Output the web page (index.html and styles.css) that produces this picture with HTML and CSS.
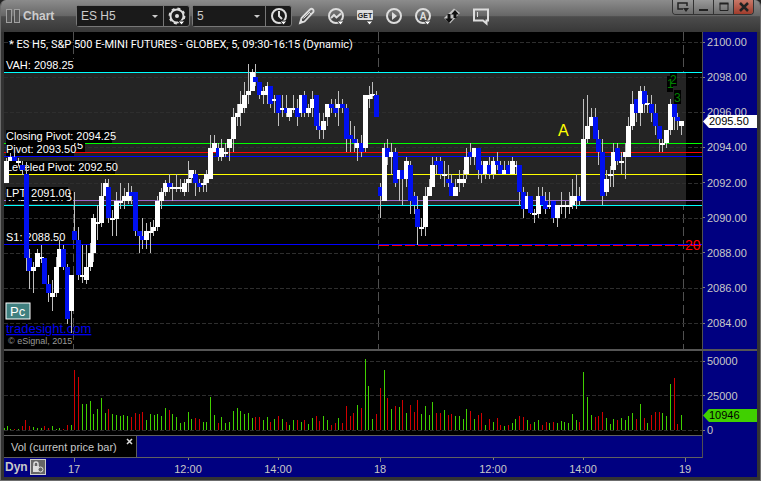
FILE: index.html
```html
<!DOCTYPE html>
<html lang="en">
<head>
  <meta charset="UTF-8" />
  <meta name="viewport" content="width=device-width, initial-scale=1.0"/>
  <title>Chart - ES H5</title>
  <link rel="stylesheet" href="styles.css">
</head>
<body>

<div class="window">

  <!-- Title bar + tools -->
  <header class="toolbar">
    <span class="grip"><i></i><i></i></span>
    <h1>Chart</h1>

    <div class="combo symbol">
      <select aria-label="Symbol"><option>ES H5</option></select>
      <button type="button" aria-label="Symbol settings">
        <svg width="20" height="20" viewBox="0 0 20 20">
          <circle cx="10" cy="10" r="6.5" fill="none" stroke="#ddd" stroke-width="2"/>
          <circle cx="10" cy="10" r="7.6" fill="none" stroke="#ddd" stroke-width="1.6" stroke-dasharray="3 3"/>
          <circle cx="10" cy="10" r="2" fill="#ddd"/>
          <path d="M11 15h7l-3.500 4z" fill="#fff" stroke="#1a1a1a" stroke-width="1"/>
        </svg>
      </button>
    </div>

    <div class="combo interval">
      <select aria-label="Interval"><option>5</option></select>
      <button type="button" aria-label="Time template">
        <svg width="20" height="20" viewBox="0 0 20 20">
          <circle cx="10" cy="10" r="7" fill="none" stroke="#ddd" stroke-width="2"/>
          <path d="M10 5v5l3 3" fill="none" stroke="#ddd" stroke-width="2"/>
          <path d="M11 15h7l-3.500 4z" fill="#fff" stroke="#1a1a1a" stroke-width="1"/>
        </svg>
      </button>
    </div>

    <nav class="tools">
      <button type="button" aria-label="Draw">
        <svg width="20" height="20" viewBox="0 0 20 20">
          <path d="M3 17l1.500-5L13 3.500a2 2 0 0 1 3 3L7.500 15.500z" fill="none" stroke="#ddd" stroke-width="1.800"/>
          <path d="M3 17l1-3 2 2zM11.500 5.500l3 3M6.500 12.500l6-6" fill="#ddd" stroke="#ddd" stroke-width="1"/>
        </svg>
      </button>
      <button type="button" aria-label="Studies">
        <svg width="20" height="20" viewBox="0 0 20 20">
          <circle cx="10" cy="10" r="7" fill="none" stroke="#ddd" stroke-width="2"/>
          <path d="M5 12l3-3 2.500 2.500L15 7.500" fill="none" stroke="#ddd" stroke-width="2"/>
          <path d="M11 15h7l-3.500 4z" fill="#fff" stroke="#444" stroke-width="1"/>
        </svg>
      </button>
      <button type="button" aria-label="GET studies">
        <svg width="20" height="20" viewBox="0 0 20 20">
          <rect x="2" y="4" width="16" height="10" rx="1" fill="#ddd"/>
          <text x="10" y="12" class="get">GET</text>
          <path d="M11 15h7l-3.500 4z" fill="#fff" stroke="#444" stroke-width="1"/>
        </svg>
      </button>
      <button type="button" aria-label="Playback">
        <svg width="20" height="20" viewBox="0 0 20 20">
          <circle cx="10" cy="10" r="7" fill="none" stroke="#ddd" stroke-width="2"/>
          <path d="M8 6v8l5-4z" fill="#ddd"/>
        </svg>
      </button>
      <button type="button" aria-label="Alerts">
        <svg width="20" height="20" viewBox="0 0 20 20">
          <circle cx="10" cy="10" r="7" fill="none" stroke="#ddd" stroke-width="2"/>
          <text x="10" y="14" class="letter">A</text>
          <path d="M11 15h7l-3.500 4z" fill="#fff" stroke="#444" stroke-width="1"/>
        </svg>
      </button>
      <button type="button" aria-label="Trade">
        <svg width="20" height="20" viewBox="0 0 20 20">
          <path d="M2 12L12 2.500l6 4.500L8 17.500z" fill="#c4c4c4"/>
          <path d="M13 4l4 4.500h-2.500V12h-3V8.500H9zM7 17l-4-4.500h2.500V8h3v4.500H11z" fill="#111"/>
        </svg>
      </button>
      <button type="button" aria-label="Comment">
        <svg width="20" height="20" viewBox="0 0 20 20">
          <path d="M3 3.500h14v11h-1.500V17.500l-3.500-3H3z" fill="none" stroke="#ddd" stroke-width="2"/>
          <path d="M6.500 6v5" stroke="#ddd" stroke-width="1"/>
        </svg>
      </button>
    </nav>

    <div class="controls">
      <button type="button" aria-label="Dock">
        <svg width="12" height="10" viewBox="0 0 12 10"><path d="M6 7H1V1h9v3" fill="none" stroke="#222" stroke-width="1.500"/><path d="M6 6h6l-3 4z" fill="#222"/></svg>
      </button>
      <button type="button" aria-label="Minimize">
        <svg width="12" height="10" viewBox="0 0 12 10"><path d="M1 7h9v2H1z" fill="#222"/></svg>
      </button>
      <button type="button" aria-label="Maximize">
        <svg width="12" height="10" viewBox="0 0 12 10"><path d="M2 1.500h8v7H2z" fill="none" stroke="#222" stroke-width="1"/><path d="M1.500 1.500h9" stroke="#222" stroke-width="2"/></svg>
      </button>
      <button type="button" class="close" aria-label="Close">
        <svg width="12" height="10" viewBox="0 0 12 10"><path d="M2 1l8 8M10 1L2 9" stroke="#222" stroke-width="2.500"/></svg>
      </button>
    </div>
  </header>

  <main class="chart">

    <!-- Price -->
    <svg class="plot" viewBox="4 32 698 317">
      <g id="verticals"></g>
      <rect class="value-area" x="4" y="72" width="682" height="133"/>
      <g id="grid"></g>
      <g id="levels"></g>
      <g id="labels"></g>
      <text class="title" x="9" y="48">* ES H5, S&amp;P 500 E-MINI FUTURES - GLOBEX, 5, 09:30-16:15 (Dynamic)</text>
      <a href="http://www.tradesight.com"><text class="site" x="6" y="333">tradesight.com</text></a>
      <g id="candles"></g>
      <rect class="pc" x="6" y="303" width="24" height="16"/>
      <text class="pc-text" x="10" y="316">Pc</text>
      <text class="copy" x="8" y="344">© eSignal, 2015</text>
      <text class="wave" x="558" y="136">A</text>
      <path d="M667 76h3v-3h7v13h-4v6h-6zM674 90h7v14h-7z" fill="#000"/>
      <text class="count" x="667" y="88">1</text>
      <text class="count" x="670" y="84">2</text>
      <text class="count" x="674" y="102">3</text>
      <text class="stop" x="685" y="250">20</text>
    </svg>
    <div class="axis">
      <ul class="scale">
        <li>2100.00</li>
        <li>2098.00</li>
        <li>2096.00</li>
        <li>2094.00</li>
        <li>2092.00</li>
        <li>2090.00</li>
        <li>2088.00</li>
        <li>2086.00</li>
        <li>2084.00</li>
      </ul>
      <span class="tag last">2095.50</span>
    </div>

    <div class="divider"></div>

    <!-- Volume -->
    <svg class="plot" viewBox="4 351 698 84">
      <g id="volgrid"></g>
      <g id="volume"></g>
    </svg>
    <div class="axis">
      <ul class="scale small">
        <li>50000</li>
        <li>25000</li>
        <li>0</li>
      </ul>
      <span class="tag vol">10946</span>
    </div>

    <div class="tabs">
      <div class="tab">
        <span>Vol (current price bar)</span>
        <button type="button" aria-label="Close tab">
          <svg width="7" height="7" viewBox="0 0 7 7"><path d="M1 1l5 5M6 1L1 6" stroke="#ddd" stroke-width="1.500"/></svg>
        </button>
      </div>
    </div>
    <div class="axis"></div>

    <div class="timeline">
      <svg viewBox="4 458 698 19"><g id="times"></g></svg>
      <div class="mode">
        <b>Dyn</b>
        <button type="button" aria-label="Lock time template">
          <svg width="12" height="12" viewBox="0 0 12 12">
            <path d="M2 6V3a2 2 0 0 1 4 0v2" fill="none" stroke="#ddd" stroke-width="1.500"/>
            <path d="M1 5h6v6H1z" fill="#ddd"/>
            <circle cx="8.500" cy="8.500" r="2.500" fill="#666" stroke="#ddd" stroke-width="1"/>
          </svg>
        </button>
      </div>
    </div>
    <div class="axis"></div>

  </main>
</div>

<script src="chart.js"></script>
</body>
</html>
```
FILE: styles.css
```css
* {
  box-sizing: border-box;
}

body {
  margin: 0;
  background: #222;
  color: #c8c8c8;
  font-family: "Liberation Sans", Arial, sans-serif;
  font-size: 11px;
}

button {
  display: flex;
  align-items: center;
  justify-content: center;
  padding: 0;
  border: 0;
  background: none;
}

/* === WINDOW FRAME === */
.window {
  padding: 0 3px 3px;
  background: #333;
  border: 1px solid #6c6c6c;
  border-top: 0;
  border-radius: 6px 6px 0 0;
  overflow: hidden;
}

/* === TOOLBAR === */
.toolbar {
  display: flex;
  align-items: center;
  height: 32px;
  margin: 0 -3px;
  padding-left: 5px;
  background: linear-gradient(#8c8c8c, #666 50%, #4c4c4c 52%, #383838);
}

.grip {
  display: flex;
  gap: 2px;
}

.grip i {
  width: 6px;
  height: 14px;
  border: 1px solid #a0a0a0;
  background: #555;
}

.toolbar h1 {
  margin: 0 0 0 3px;
  width: 53px;
  font-size: 12px;
  color: #ccc;
}

.combo {
  position: relative;
  display: flex;
  height: 22px;
  border: 1px solid #777;
  border-radius: 3px;
  background: #1a1a1a;
}

.combo select {
  appearance: none;
  padding: 0 4px;
  border: 0;
  color: #ccc;
  font: 12px "Liberation Sans", Arial, sans-serif;
  background: #1a1a1a;
}

/* drop-down arrow */
.combo::after {
  content: "";
  position: absolute;
  right: 31px;
  top: 9px;
  border: 3px solid transparent;
  border-top-color: #ccc;
  border-bottom: 0;
}

.combo button {
  width: 26px;
  border-left: 1px solid #777;
}

.symbol {
  margin-right: 2px;
}

.symbol select {
  width: 86px;
}

.interval select {
  width: 72px;
}

.tools {
  display: flex;
  gap: 9px;
  margin-left: 5px;
}

.tools button {
  width: 20px;
  height: 20px;
}

.get {
  fill: #222;
  font-size: 7px;
  font-weight: bold;
  text-anchor: middle;
}

.letter {
  fill: #ddd;
  font-size: 10px;
  font-weight: bold;
  text-anchor: middle;
}

.controls {
  display: flex;
  align-self: flex-start;
  margin-left: auto;
  margin-right: 6px;
  border: 1px solid #333;
  border-top: 0;
  border-radius: 0 0 4px 4px;
  overflow: hidden;
}

.controls button {
  width: 20px;
  height: 14px;
  background: linear-gradient(#999, #6c6c6c);
}

.controls button + button {
  border-left: 1px solid #333;
}

.controls .close {
  background: linear-gradient(#c87868, #a03c2c);
}

/* === CHART === */
.chart {
  display: grid;
  grid-template-columns: 1fr 55px;
  background: #000080;
}

.plot {
  display: block;
  width: 100%;
  background: #000;
}

.axis {
  position: relative;
  border-left: 1px solid #505050;
}

.chart > .axis:last-child {
  border-color: #000080;
}

.divider {
  grid-column: 1 / -1;
  height: 2px;
  background: #555;
}

.scale {
  display: flex;
  flex-direction: column;
  justify-content: space-between;
  height: 100%;
  margin: 0;
  padding: 3px 0 19px;
  list-style: none;
  line-height: 14px;
}

.scale.small {
  padding: 5px 0 0;
  line-height: 10px;
}

.scale li {
  display: flex;
  align-items: center;
  gap: 2px;
}

.scale li::before {
  content: "";
  width: 2px;
  height: 1px;
  background: #808080;
}

.tag {
  position: absolute;
  left: 0;
  right: 0;
  padding-left: 6px;
  line-height: 13px;
  color: #000;
  clip-path: polygon(0 50%, 6px 0, 100% 0, 100% 100%, 6px 100%);
}

.last {
  top: 83px;
  background: #fff;
}

.vol {
  top: 58px;
  background: #40d000;
}

/* === LINES AND LABELS === */
.value-area {
  fill: #242424;
}

.title,
.label {
  fill: #fff;
  font-size: 11px;
}

.title {
  font-family: Roboto, "Liberation Sans", sans-serif;
}

.site {
  fill: #0000f0;
  font-size: 13px;
  text-decoration: underline;
}

.copy {
  fill: #999;
  font-size: 9px;
}

.pc {
  fill: #408080;
  stroke: #fff;
}

.pc-text {
  fill: #fff;
  font-size: 13px;
}

.wave {
  fill: #ff0;
  font-size: 16px;
}

.count {
  fill: #008000;
  font-size: 12px;
}

.stop {
  fill: #f00;
  font-size: 14px;
}

.time {
  fill: #c8c8c8;
  font-size: 11px;
  text-anchor: middle;
}

/* === TABS AND TIME AXIS === */
.tabs {
  display: flex;
  height: 23px;
  border-top: 1px solid #606060;
  border-bottom: 1px solid #606060;
}

.tab {
  display: flex;
  align-items: center;
  gap: 9px;
  padding: 0 3px 0 7px;
  background: #000;
  border-right: 1px solid #606060;
}

.tab button {
  align-self: flex-start;
  margin-top: 2px;
}

.timeline {
  position: relative;
}

.timeline > svg {
  display: block;
  width: 100%;
}

.mode {
  position: absolute;
  left: 1px;
  top: 1px;
  display: flex;
  align-items: center;
  gap: 2px;
}

.mode b {
  font-size: 12px;
}

.mode button {
  width: 16px;
  height: 16px;
  border: 1px solid #ccc;
  background: #666;
}
```
FILE: chart.js
```js
const NS = 'http://www.w3.org/2000/svg';

function add(id, tag, attrs, text) {
  const el = document.createElementNS(NS, tag);
  for (const key in attrs) el.setAttribute(key, attrs[key]);
  if (text) el.textContent = text;
  document.getElementById(id).appendChild(el);
}

function hline(id, y, color, from = 4, dash = '') {
  add(id, 'path', { d: `M${from} ${y + 0.5}H702`, stroke: color, 'stroke-dasharray': dash });
}

// Session breaks
[73, 378, 683].forEach(x => {
  add('verticals', 'path', { d: `M${x + 0.5} 32V349`, stroke: '#505050', 'stroke-dasharray': '9 4' });
});

// Grid
[42, 77, 112, 147, 183, 218, 253, 288, 323].forEach(y => hline('grid', y, '#2e2e2e', 4, '4 2'));
[361, 395, 430].forEach(y => hline('volgrid', y, '#2e2e2e', 4, '4 2'));

// Pivot levels
hline('levels', 72, '#00ffff');
hline('levels', 143, '#00ff00');
hline('levels', 152, '#ff0000');
hline('levels', 156, '#0000ff');
hline('levels', 174, '#ffff00');
hline('levels', 200, '#9966cc');
hline('levels', 205, '#00ffff');
hline('levels', 245, '#ff0000', 379, '10 3');
hline('levels', 244, '#0000ff');

// text, baseline, right edge
const labels = [
  ['VAH: 2098.25', 69, 74],
  ['VPOC: 2093.75', 149, 85],
  ['Closing Pivot: 2094.25', 140, 112],
  ['Pivot: 2093.50', 153, 74],
  ['Leveled Pivot: 2092.50', 171, 115],
  ['VAL: 2090.75', 201, 73],
  ['LPT: 2091.00', 197, 68],
  ['S1: 2088.50', 241, 64]
];
labels.forEach(([text, y, right]) => {
  add('labels', 'rect', { x: 6, y: y - 10, width: right - 6, height: 13 });
  add('labels', 'text', { x: 6, y, class: 'label' }, text);
});

// x, high, body top, body bottom, low, w(hite) / b(lue)
const candles = `
6 158 161 183 183 w|10 153 157 161 161 w|14 152 157 161 161 b|18 158 161 163 166 w|22 161 165 170 175 b|26 162 174 258 271 b
29 249 258 271 289 b|33 262 267 271 293 w|37 249 253 267 267 w|41 245 257 259 263 w|44 258 258 284 284 b|48 275 284 293 302 b
52 280 293 297 311 w|56 257 267 293 297 w|59 240 249 267 267 w|63 245 249 267 270 b|67 264 267 319 324 b|71 275 275 311 333 w
74 192 231 240 240 b|78 227 240 275 280 b|82 245 275 277 283 w|86 245 267 280 284 w|90 243 253 267 271 w|93 214 218 253 262 w
97 205 222 224 240 w|101 183 196 223 227 w|105 179 183 196 196 w|108 179 187 218 223 b|112 210 218 220 236 w|116 192 201 219 236 w
120 183 201 203 209 w|124 188 196 201 209 w|128 183 192 201 204 w|131 186 192 196 204 b|135 192 192 231 236 b|139 231 231 236 253 b
142 218 236 240 249 b|146 223 231 240 249 w|150 222 231 233 253 w|153 220 227 231 236 w|157 196 201 227 231 w|161 188 192 201 209 w
165 180 183 192 196 w|169 174 183 187 192 b|172 183 187 189 201 w|176 174 187 189 192 w|180 179 187 189 192 w|184 179 183 192 196 w
188 161 179 183 192 w|191 170 170 178 183 w|195 170 174 183 196 b|199 179 183 187 192 b|203 179 183 185 192 w|206 170 174 183 192 w
210 135 148 179 179 w|214 135 143 152 152 w|218 143 148 157 161 b|221 139 148 157 161 w|225 143 152 154 157 w|229 139 139 148 161 w
233 108 117 139 152 w|237 104 113 117 126 w|240 91 104 113 126 w|244 82 95 108 113 w|248 64 91 95 104 w|252 69 72 91 91 w
255 64 77 82 86 b|259 82 82 95 99 b|263 87 91 95 104 w|267 82 86 95 104 w|270 86 86 104 108 b|274 95 99 101 113 w
278 95 95 113 126 b|282 95 108 110 117 w|286 95 108 113 117 b|289 108 108 117 121 w|293 95 108 110 113 w|297 99 108 117 126 b
301 95 95 113 117 w|304 91 95 113 117 b|308 104 108 113 117 w|312 91 99 108 117 w|316 95 95 126 130 b|319 113 126 130 139 b
323 113 121 130 139 w|327 104 104 117 126 w|331 99 104 108 113 b|335 99 108 113 117 b|338 91 104 108 126 w|342 99 104 108 113 b
346 104 108 139 152 b|350 121 135 139 152 b|354 126 139 143 152 b|357 139 143 148 161 w|361 135 143 152 157 b|365 95 95 148 152 w
369 86 95 99 108 w|372 82 94 96 99 w|376 91 95 117 117 b
380 183 187 196 218 b|384 143 148 201 201 w|387 139 148 157 165 b|391 143 152 157 174 w|395 148 152 183 187 b|399 170 170 179 201 w
402 170 170 179 205 b|406 157 161 179 187 w|410 161 165 201 214 b|414 192 196 205 214 b|417 196 209 227 245 b|421 218 227 229 236 w
425 187 196 227 236 w|429 179 187 196 196 w|432 157 165 187 187 w|436 157 161 165 174 b|440 157 161 174 179 b|444 161 174 176 187 w
448 165 179 183 187 b|451 174 183 196 196 b|455 179 187 196 196 w|459 170 179 183 192 w|463 170 179 183 187 w|466 148 157 174 179 w
470 143 152 157 165 b|474 148 148 157 165 w|478 148 148 170 179 b|481 161 165 174 183 b|485 161 161 174 179 w|489 157 165 174 179 b
493 157 161 174 179 w|497 152 161 165 170 b|500 161 165 174 174 b|504 161 170 174 174 w|508 161 165 174 174 b|512 157 161 174 174 w
516 161 165 167 174 w|519 165 165 192 205 b|523 187 192 209 218 b|527 192 196 209 209 w|530 196 196 213 214 b|534 209 213 215 223 w
538 187 196 214 218 w|542 187 196 205 205 b|545 192 201 209 214 b|549 192 205 207 209 w|553 201 201 218 223 b|557 205 205 218 227 w
561 192 205 207 214 w|565 201 205 207 218 w|569 192 205 207 214 w|572 179 196 205 209 w|576 174 196 201 209 w|579 187 196 201 205 b
583 99 139 201 201 w|587 95 126 139 143 w|591 108 117 126 126 w|595 108 117 139 139 b|598 130 139 152 165 b|602 139 152 196 205 b
606 170 179 192 196 w|610 166 174 176 187 w|613 143 152 170 187 w|617 143 148 161 165 b|621 152 161 163 174 w|625 143 152 157 179 w
628 117 126 157 157 w|632 91 104 126 130 w|636 99 99 113 122 b|640 86 91 113 126 w|644 86 91 104 113 b|647 95 103 105 113 w
651 95 104 113 122 b|655 104 113 126 135 b|659 126 126 139 152 b|662 139 143 145 152 w|666 130 130 143 148 w|670 99 104 130 135 w
674 95 104 117 130 b|677 113 117 121 130 b|681 121 121 126 135 w`;

candles.trim().split(/[|\n]/).forEach(row => {
  const [x, high, top, bottom, low, side] = row.split(' ');
  add('candles', 'rect', { x, y: high, width: 1, height: low - high, fill: '#c0c0c0' });
  add('candles', 'rect', { x: x - 2, y: top, width: 5, height: bottom - top, fill: side === 'w' ? '#fff' : '#0010f0' });
});

// up (g) or down (r), x : height
const volume = `g4:2 g7:4 g10:1 r14:1 g18:1 r22:4 r25:10 r29:4 g33:3 g37:2 g41:2 r44:4 r48:2 g52:4 g56:1 g59:2 r63:1 r67:5 g71:5
r74:60 r78:53 g82:26 g86:26 g90:29 g93:16 g97:21 g101:32 g105:17 r108:21 g112:16 g116:15 g120:14 g123:15 g127:14 r131:13
r135:17 r139:16 r142:18 g146:10 g150:16 g154:15 g157:16 g161:14 g165:22 r169:20 g172:16 g176:13 g180:7 g184:8 g188:18
g191:11 r195:12 r199:11 g203:8 g206:8 g210:33 g214:15 r218:7 g221:13 g225:7 g229:8 g233:19 g237:22 g240:19 g244:16
g248:17 g252:12 r255:13 r259:13 g263:10 g267:13 r270:8 g274:11 r278:14 g282:11 r286:8 g289:5 g293:10 r297:10 g301:8
r304:10 g308:6 g312:12 r316:14 r319:9 g323:14 g327:10 r331:5 r335:7 g338:12 r342:7 r346:24 r350:14 r353:17 g357:25
r361:22 g365:71 g368:44 g372:11 r376:16 r380:42 g384:60 r387:32 g391:21 r395:24 g399:23 r402:30 g406:17 r410:25
r414:18 r417:30 g421:16 g425:24 g429:15 g432:28 r436:17 r440:17 g444:20 r448:15 r451:16 g455:14 g459:14 g463:11
g466:21 r470:19 g474:11 r478:15 r481:17 g485:5 r489:11 g493:8 r497:12 r500:5 g504:4 r508:5 g512:7 g515:11 r519:14
r523:13 g527:10 r530:6 g534:8 g538:10 r542:5 r546:8 g549:7 r553:8 g557:7 g561:9 g564:8 g568:7 g572:16 g576:10 r579:8
g583:58 g587:33 g591:15 r595:13 r598:14 r602:18 g606:12 g610:6 g613:11 r617:10 g621:12 g625:10 g628:14 g632:17
r636:11 g640:26 r644:12 g647:7 r651:15 r655:18 r659:18 g662:17 g666:14 g670:46 r674:52 r677:6 g681:15`;

volume.split(/\s+/).forEach(bar => {
  const [x, height] = bar.slice(1).split(':');
  add('volume', 'rect', { x, y: 430 - height, width: 1, height, fill: bar[0] === 'g' ? '#40d000' : '#d00000' });
});

// Time axis
[[74, '17'], [188, '12:00'], [278, '14:00'], [380, '18'], [493, '12:00'], [583, '14:00'], [685, '19']].forEach(([x, text]) => {
  add('times', 'rect', { x, y: 458, width: 1, height: text.length > 2 ? 2 : 4, fill: '#808080' });
  add('times', 'text', { x, y: 473, class: 'time' }, text);
});
```
